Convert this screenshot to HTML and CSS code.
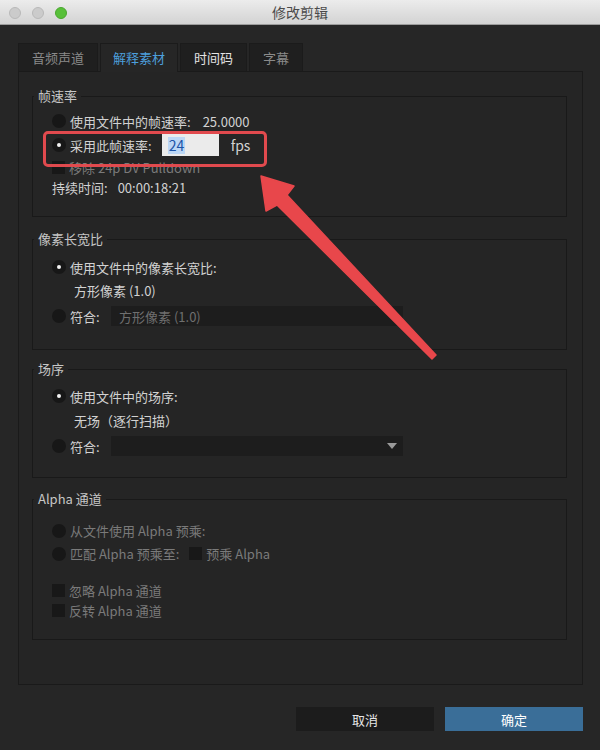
FILE: index.html
```html
<!DOCTYPE html>
<html lang="zh-CN">
<head>
<meta charset="utf-8">
<title>修改剪辑</title>
<link rel="stylesheet" href="styles.css">
</head>
<body>
<div class="window">
  <header class="titlebar">
    <div class="lights">
      <span class="light"></span>
      <span class="light"></span>
      <span class="light zoom"></span>
    </div>
    <div class="title">修改剪辑</div>
    <div></div>
  </header>

  <main class="content">
    <nav class="tabs">
      <div class="tab dim">音频声道</div>
      <div class="tab active">解释素材</div>
      <div class="tab bright">时间码</div>
      <div class="tab dim">字幕</div>
    </nav>

    <section class="panel">
      <fieldset class="group g-rate">
        <legend>帧速率</legend>
        <div class="row h24"><span class="radio"></span><span class="label">使用文件中的帧速率:</span><span class="value">25.0000</span></div>
        <div class="row h24"><span class="radio on"></span><span class="label">采用此帧速率:</span><span class="field"><span class="sel">24</span></span><span class="unit">fps</span></div>
        <div class="row h20 disabled"><span class="check"></span><span class="label">移除 24p DV Pulldown</span></div>
        <div class="row h20"><span class="label plain">持续时间:</span><span class="value tc">00:00:18:21</span></div>
      </fieldset>

      <fieldset class="group g-pixel">
        <legend>像素长宽比</legend>
        <div class="row h24"><span class="radio on"></span><span class="label">使用文件中的像素长宽比:</span></div>
        <div class="row h22 sub">方形像素 (1.0)</div>
        <div class="row h24 gap3"><span class="radio"></span><span class="label conform">符合:</span><span class="dropdown">方形像素 (1.0)</span></div>
      </fieldset>

      <fieldset class="group g-field">
        <legend>场序</legend>
        <div class="row h24"><span class="radio on"></span><span class="label">使用文件中的场序:</span></div>
        <div class="row h24 sub">无场（逐行扫描）</div>
        <div class="row h24 gap2"><span class="radio"></span><span class="label conform">符合:</span><span class="dropdown"><span class="caret"></span></span></div>
      </fieldset>

      <fieldset class="group g-alpha">
        <legend>Alpha 通道</legend>
        <div class="row h23 disabled"><span class="radio"></span><span class="label">从文件使用 Alpha 预乘:</span></div>
        <div class="row h23 disabled"><span class="radio"></span><span class="label">匹配 Alpha 预乘至:</span><span class="check inline"></span><span class="label">预乘 Alpha</span></div>
        <div class="row h20 disabled gap15"><span class="check"></span><span class="label">忽略 Alpha 通道</span></div>
        <div class="row h20 disabled"><span class="check"></span><span class="label">反转 Alpha 通道</span></div>
      </fieldset>
    </section>

    <footer class="actions">
      <button class="btn cancel">取消</button>
      <button class="btn ok">确定</button>
    </footer>
  </main>

  <!-- annotation drawn over the dialog -->
  <div class="callout"></div>
  <svg class="pointer" width="600" height="750" viewBox="0 0 600 750" aria-hidden="true">
    <polygon points="436,355 287,195 294,186 261,176 266,211 277,205 432,359" fill="#e8474b" stroke="#e8474b" stroke-width="1.5" stroke-linejoin="round"/>
  </svg>
</div>
</body>
</html>
```

FILE: styles.css
```css
* {
  box-sizing: border-box;
}

html, body {
  margin: 0;
  padding: 0;
  background: #262626;
}

body {
  font-family: "Noto Sans CJK SC", "Noto Sans", "Liberation Sans", sans-serif;
  font-size: 13px;
  color: #d0d0d0;
}

.window {
  position: relative;
  width: 600px;
  height: 750px;
  overflow: hidden;
  background: #262626;
}

/* title bar */
.titlebar {
  height: 25px;
  display: grid;
  grid-template-columns: 1fr auto 1fr;
  align-items: center;
  background: linear-gradient(#ececec, #d3d3d3);
  border-bottom: 1px solid #9c9c9c;
}

.lights {
  display: flex;
  gap: 11px;
  padding-left: 9px;
}

.light {
  width: 12px;
  height: 12px;
  border-radius: 50%;
  background: #cbcbcb;
  border: 1px solid #b9b9b9;
}

.light.zoom {
  background: #58c03a;
  border-color: #4aa72f;
}

.title {
  font-size: 14px;
  color: #4a4a4a;
  line-height: 25px;
}

/* main area */
.content {
  padding: 18px 17px 0 18px;
}

.tabs {
  display: flex;
  gap: 2px;
  height: 28px;
}

.tab {
  height: 28px;
  line-height: 28px;
  text-align: center;
  background: #1f1f1f;
  border: 1px solid #1b1b1b;
  border-bottom: none;
}

.tab:nth-child(1) { width: 80px; }
.tab:nth-child(2) { width: 78px; }
.tab:nth-child(3) { width: 67px; }
.tab:nth-child(4) { width: 54px; }

.tab.dim { color: #8a8a8a; }
.tab.bright { color: #e4e4e4; }

.tab.active {
  background: #262626;
  color: #4d9fdc;
  position: relative;
  z-index: 1;
  margin-bottom: -1px;
  height: 29px;
}

.panel {
  height: 614px;
  border: 1px solid #1a1a1a;
  padding: 16px 15px 0 13px;
  background: #252525;
}

/* group boxes */
.group {
  margin: 0;
  padding: 0 0 0 19px;
  border: 1px solid #191919;
  min-width: 0;
}

.group legend {
  margin-left: -18px;
  padding: 0 4px;
  line-height: 16px;
  height: 16px;
  color: #c6c6c6;
}

.g-rate  { height: 129px; padding-top: 5px; }
.g-pixel { height: 119px; padding-top: 8px; margin-top: 14px; }
.g-field { height: 117px; padding-top: 7px; margin-top: 11px; }
.g-alpha { height: 149px; padding-top: 12px; margin-top: 13px; }

.row {
  display: flex;
  align-items: center;
  white-space: nowrap;
}

.h20 { height: 20px; }
.h22 { height: 22px; }
.h23 { height: 23px; }
.h24 { height: 24px; }
.gap2 { margin-top: 2px; }
.gap3 { margin-top: 3px; }
.gap15 { margin-top: 15px; }

.label {
  margin-left: 4px;
  color: #d2d2d2;
}

.label.plain {
  margin-left: 0;
}

.label.conform {
  width: 41px;
}

.value {
  margin-left: 12px;
  color: #d2d2d2;
}

.value.tc {
  margin-left: 10px;
}

.sub {
  padding-left: 22px;
  color: #d2d2d2;
}

.disabled .label {
  color: #7a7a7a;
}

/* controls */
.radio {
  flex: none;
  width: 14px;
  height: 14px;
  border-radius: 50%;
  background: #171717;
  display: flex;
  align-items: center;
  justify-content: center;
}

.radio.on::after {
  content: "";
  width: 4px;
  height: 4px;
  border-radius: 50%;
  background: #f2f2f2;
}

.check {
  flex: none;
  width: 13px;
  height: 13px;
  background: #181818;
}

.check.inline {
  margin-left: 10px;
}

.field {
  margin-left: 10px;
  width: 57px;
  height: 22px;
  background: #ebebeb;
  display: flex;
  align-items: center;
  padding-left: 6px;
}

.sel {
  background: #bcd7f5;
  color: #1d54a8;
  font-size: 14px;
  line-height: 17px;
  padding: 0 1px;
}

.unit {
  margin-left: 12px;
  color: #d2d2d2;
  font-size: 14px;
}

.dropdown {
  width: 292px;
  height: 20px;
  background: #1d1d1d;
  color: #6f6f6f;
  padding-left: 8px;
  display: flex;
  align-items: center;
  justify-content: space-between;
  padding-right: 6px;
}

.caret {
  margin-left: auto;
  width: 0;
  height: 0;
  border-left: 5px solid transparent;
  border-right: 5px solid transparent;
  border-top: 6px solid #9a9a9a;
}

/* buttons */
.actions {
  display: flex;
  justify-content: flex-end;
  gap: 11px;
  margin-top: 22px;
}

.btn {
  width: 138px;
  height: 24px;
  border: none;
  font-family: inherit;
  font-size: 13px;
  padding: 0;
}

.btn.cancel {
  background: #1c1c1c;
  color: #e6e6e6;
}

.btn.ok {
  background: #3a6e98;
  color: #ffffff;
}

/* red annotation */
.callout {
  position: absolute;
  left: 43px;
  top: 131px;
  width: 224px;
  height: 36px;
  border: 3px solid #e14a4e;
  border-radius: 5px;
}

.pointer {
  position: absolute;
  left: 0;
  top: 0;
  pointer-events: none;
}
```
